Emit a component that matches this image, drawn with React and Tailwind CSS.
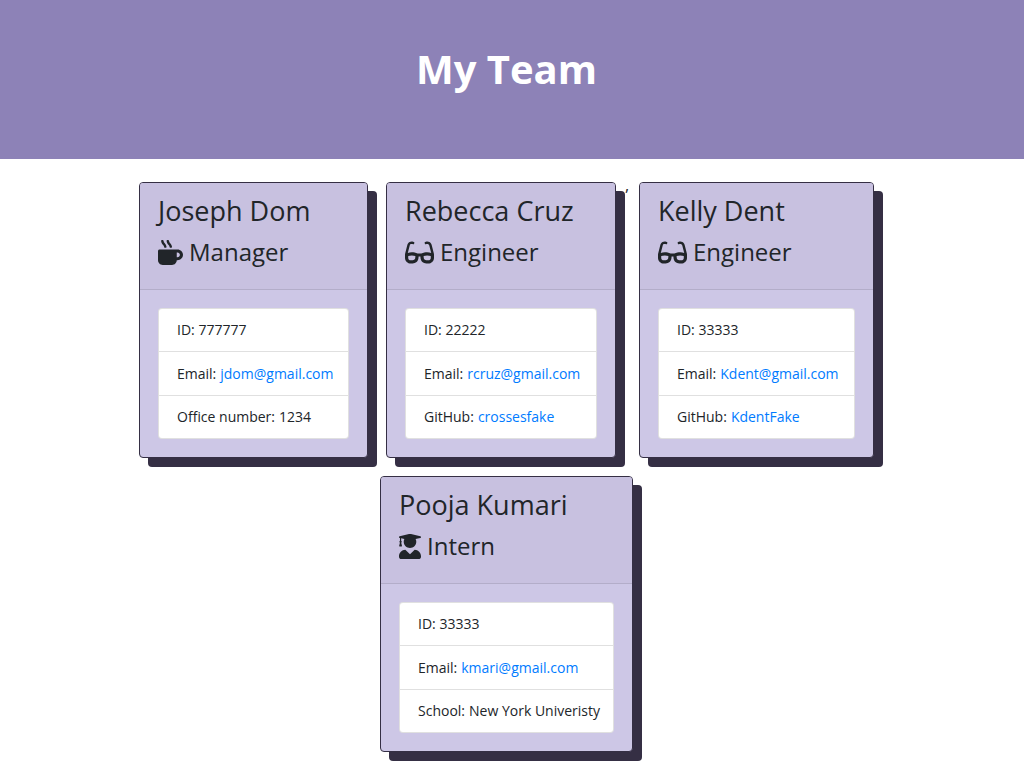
import React from "react";
import { FaMugHot, FaGlasses, FaUserGraduate } from "react-icons/fa";

const team = [
  {
    name: "Joseph Dom",
    role: "Manager",
    Icon: FaMugHot,
    iconClass: "size-[25px]",
    width: "w-[229px]",
    id: "777777",
    email: "jdom@gmail.com",
    extra: { label: "Office number", value: "1234" },
  },
  {
    name: "Rebecca Cruz",
    role: "Engineer",
    Icon: FaGlasses,
    iconClass: "h-[25px] w-[29px]",
    width: "w-[230px]",
    id: "22222",
    email: "rcruz@gmail.com",
    extra: { label: "GitHub", value: "crossesfake", href: "https://github.com/crossesfake" },
    separator: ",",
  },
  {
    name: "Kelly Dent",
    role: "Engineer",
    Icon: FaGlasses,
    iconClass: "h-[25px] w-[29px]",
    width: "w-[235px]",
    id: "33333",
    email: "Kdent@gmail.com",
    extra: { label: "GitHub", value: "KdentFake", href: "https://github.com/KdentFake" },
  },
  {
    name: "Pooja Kumari",
    role: "Intern",
    Icon: FaUserGraduate,
    iconClass: "h-[25px] w-[22px]",
    width: "w-[253px]",
    id: "33333",
    email: "kmari@gmail.com",
    extra: { label: "School", value: "New York Univeristy" },
  },
];

const rowClass =
  "flex h-11 items-center gap-1 whitespace-nowrap border-x border-b border-black/12 px-[18px] first:rounded-t first:border-t last:rounded-b last:h-[43px] bg-white";

function Card({ member }) {
  const { name, role, Icon, iconClass, width, id, email, extra } = member;
  return (
    <article
      className={`${width} m-[9px] rounded border border-[#352f44] bg-[#cdc7e6] shadow-[9px_9px_0_#352f44]`}
    >
      <header className="h-[107px] rounded-t-[3px] border-b border-[#b3adc9] bg-[#c8c1e0] px-[18px] pt-2.5">
        <h2 className="text-[27px] leading-9">{name}</h2>
        <h3 className="mt-[5px] flex items-center gap-1.5 text-2xl leading-9">
          <Icon className={iconClass} preserveAspectRatio="none" aria-hidden="true" />
          {role}
        </h3>
      </header>
      <div className="p-[18px]">
        <ul className="text-sm">
          <li className={rowClass}>ID: {id}</li>
          <li className={rowClass}>
            Email:
            <a className="text-[#007bff]" href={`mailto:${email}`}>{email}</a>
          </li>
          <li className={rowClass}>
            {extra.label}:
            {extra.href ? (
              <a className="text-[#007bff]" href={extra.href}>{extra.value}</a>
            ) : (
              <span>{extra.value}</span>
            )}
          </li>
        </ul>
      </div>
    </article>
  );
}

export default function App() {
  return (
    <div className="min-h-screen bg-white font-['Trebuchet_MS','Open_Sans',sans-serif] text-[#212529]">
      <header className="h-[159px] bg-[#8d82b7] pr-[11px] pt-[37px] text-center">
        <h1 className="text-[40px] font-bold leading-[64px] text-white">My Team</h1>
      </header>
      <main className="pr-[11px] pt-3.5">
        <div className="mx-auto flex max-w-[1000px] flex-wrap justify-center">
          {team.map((member) => (
            <React.Fragment key={member.name}>
              <Card member={member} />
              {member.separator && <span className="w-[5px] text-base">{member.separator}</span>}
            </React.Fragment>
          ))}
        </div>
      </main>
    </div>
  );
}
